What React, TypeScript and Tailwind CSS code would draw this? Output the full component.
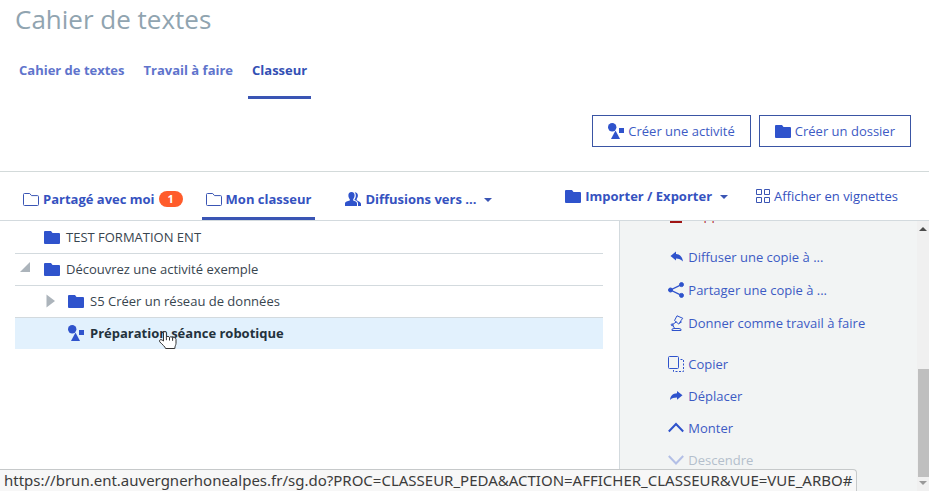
import type { ReactNode } from "react";
import clsx from "clsx";

const STATUS_URL =
  "https://brun.ent.auvergnerhonealpes.fr/sg.do?PROC=CLASSEUR_PEDA&ACTION=AFFICHER_CLASSEUR&VUE=VUE_ARBO#";

function FolderIcon() {
  return (
    <svg viewBox="0 0 16 13" className="h-[13px] w-4 shrink-0" fill="#2f53cc" aria-hidden="true">
      <path d="M0 1a1 1 0 0 1 1-1h6l1.500 2H15a1 1 0 0 1 1 1v9a1 1 0 0 1-1 1H1a1 1 0 0 1-1-1z" />
    </svg>
  );
}

function FolderOutlineIcon() {
  return (
    <svg viewBox="0 0 16 13" className="h-[13px] w-4 shrink-0" fill="none" stroke="#3a55b4" aria-hidden="true">
      <path d="M.5 11.5v-10a1 1 0 0 1 1-1h5.200L8.500 2.600h6a1 1 0 0 1 1 1v7.900a1 1 0 0 1-1 1h-13a1 1 0 0 1-1-1z" />
    </svg>
  );
}

function ActivityIcon() {
  return (
    <svg viewBox="0 0 16 16" className="size-4 shrink-0" fill="#2f53cc" aria-hidden="true">
      <circle cx="4.2" cy="4.2" r="4.2" />
      <path d="M7.500 7.500 12 16H3z" />
      <path d="M11 5h5v5h-5z" />
    </svg>
  );
}

function UsersIcon() {
  return (
    <svg viewBox="0 0 16 14" className="h-3.5 w-4 shrink-0" fill="#2f53cc" aria-hidden="true">
      <path d="M6.500 0c2.200 0 3.200 1.600 3.100 3.600-.1 1.700-.8 2.900-1.400 3.600v1.300c1.700.7 3.800 1.200 3.800 3V14H0v-2.500c0-1.800 2.600-2.300 4.800-3V7.200c-.8-.8-1.400-2-1.400-3.600C3.300 1.400 4.400 0 6.500 0z" />
      <path d="M9.600.3c2 0 3.400 1.400 3.300 3.500-.1 1.400-.6 2.400-1.200 3.100v1.400l2.300 1.300c1.300.7 2 1.500 2 2.700V14h-3v-2.600c0-1.600-1.500-2.600-3.500-3.300V7.500c.8-1 1.300-2.300 1.300-3.800 0-1.400-.3-2.500-1.200-3.400z" />
    </svg>
  );
}

function GridIcon() {
  return (
    <svg viewBox="0 0 14 14" className="size-3.5 shrink-0" fill="none" stroke="#3a55b4" aria-hidden="true">
      <path d="M.5.5h5v5h-5zM8.500.5h5v5h-5zM.5 8.500h5v5h-5zM8.500 8.500h5v5h-5z" />
    </svg>
  );
}

function Caret() {
  return (
    <svg viewBox="0 0 8 4" className="ml-1 mt-0.5 h-1 w-2 shrink-0" fill="#3a55b4" aria-hidden="true">
      <path d="M0 0h8L4 4z" />
    </svg>
  );
}

function TrashIcon() {
  return (
    <svg viewBox="0 0 16 16" className="size-4" fill="#a01414" aria-hidden="true">
      <path d="M1 2h4V0h6v2h4v2H1zM2 5h12v11H2z" />
      <path d="M5 7v7M8 7v7M11 7v7" stroke="#f3f5f5" />
    </svg>
  );
}

function ReplyIcon() {
  return (
    <svg viewBox="0 0 16 16" className="size-4" fill="#2f53cc" aria-hidden="true">
      <path d="M2.500 7 8 2.500V5c4 .3 6.500 3 7 7.500-2-2.300-4-3-7-3.100v2.200z" />
    </svg>
  );
}

function ForwardIcon() {
  return (
    <svg viewBox="0 0 16 16" className="size-4" fill="#2f53cc" aria-hidden="true">
      <path d="M14.500 7.200 9 3v2.200C5 5.400 2.400 7.500 2 12c1.800-1.800 4-2.500 7-2.500v2.300z" />
    </svg>
  );
}

function ShareIcon() {
  return (
    <svg viewBox="0 0 16 16" className="size-4" fill="#2f53cc" stroke="#2f53cc" aria-hidden="true">
      <path d="M13.500 2.700 2.500 8l11 5.300" fill="none" strokeWidth="1.300" />
      <circle cx="13.500" cy="2.600" r="2" />
      <circle cx="2.500" cy="8" r="2" />
      <circle cx="13.500" cy="13.400" r="2" />
    </svg>
  );
}

function LampIcon() {
  return (
    <svg viewBox="0 0 16 16" className="size-4" fill="none" stroke="#2f53cc" strokeLinejoin="round" aria-hidden="true">
      <path d="M4 15.500v-1.300l2-.7h5l2 .7v1.300z" />
      <path d="m6.500 13.300-2-3.800 4-2.700" />
      <circle cx="4.200" cy="9.800" r="1" />
      <path d="m9 .8 5.800 2.500-1.500 1.800-2.500 4-4.300-3.600z" />
      <path d="m11.300 8.300 2.500-1.500" />
    </svg>
  );
}

function CopyIcon() {
  return (
    <svg viewBox="0 0 16 16" className="size-4" fill="none" stroke="#2f53cc" aria-hidden="true">
      <rect x=".5" y=".5" width="10" height="12" rx="1" />
      <path d="M12.500 3.500h3v12H5.500v-2" strokeDasharray="2 1.500" />
    </svg>
  );
}

function UpIcon() {
  return (
    <svg viewBox="0 0 16 16" className="size-4" fill="none" stroke="#2f53cc" strokeWidth="2" aria-hidden="true">
      <path d="m.8 11.500 7.200-7.500 7.200 7.500" />
    </svg>
  );
}

function DownIcon() {
  return (
    <svg viewBox="0 0 16 16" className="size-4" fill="none" stroke="#b3bfe6" strokeWidth="2" aria-hidden="true">
      <path d="m.8 4 7.200 7.500 7.200-7.500" />
    </svg>
  );
}

function HandCursor() {
  return (
    <svg
      viewBox="0 0 18 18"
      className="pointer-events-none absolute left-36 top-[13px] size-[18px]"
      fill="#fff"
      stroke="#333"
      strokeLinejoin="round"
      aria-hidden="true"
    >
      <path d="M4.500 10V1.900c0-1.900 2.900-1.900 2.900 0v4.300c.3-1.100 2.900-1.100 3.100.3.500-1.100 2.900-.9 3.100.5.700-.9 3.400-.5 3.400 1.300v4c0 1.700-1 2.200-1.200 5.200H6.600C6 15.500 3.500 13.800.8 10.900c-1.200-1.500.7-3 2.300-1.900z" />
      <path d="M7.400 6.200v3M10.500 6.500v3M13.600 7v2.800" />
    </svg>
  );
}

type TreeRowProps = {
  label: string;
  icon: ReactNode;
  nested?: boolean;
  state?: "open" | "closed";
  selected?: boolean;
};

function TreeRow({ label, icon, nested, state, selected }: TreeRowProps) {
  return (
    <li
      className={clsx(
        "relative flex items-center pb-px",
        nested ? "pl-[29px]" : "pl-[5px]",
        selected ? "h-[31px] bg-[#e2f1fd]" : "h-8 border-b border-[#d3dade]"
      )}
    >
      <span className="flex w-6 shrink-0 items-center">
        {state ? (
          <button type="button" aria-label={state === "open" ? "Replier" : "Déplier"} aria-expanded={state === "open"}>
            {state === "open" ? (
              <svg viewBox="0 0 10 14" className="h-3.5 w-2.5" fill="#acb4bb">
                <path d="M10 0v10H0z" />
              </svg>
            ) : (
              <svg viewBox="0 0 10 14" className="ml-0.5 h-3.5 w-2.5" fill="#acb4bb">
                <path d="M.5.500v13L9 7z" />
              </svg>
            )}
          </button>
        ) : null}
      </span>
      <a href="#" className={clsx("flex items-center gap-1.5", selected && "font-bold text-[#24323c]")}>
        {icon}
        {label}
      </a>
      {selected ? <HandCursor /> : null}
    </li>
  );
}

type Action = { label: string; icon: ReactNode; tone?: "danger" | "disabled" };

const ACTION_GROUPS: Action[][] = [
  [{ label: "Supprimer", icon: <TrashIcon />, tone: "danger" }],
  [
    { label: "Diffuser une copie à ...", icon: <ReplyIcon /> },
    { label: "Partager une copie à ...", icon: <ShareIcon /> },
    { label: "Donner comme travail à faire", icon: <LampIcon /> }
  ],
  [
    { label: "Copier", icon: <CopyIcon /> },
    { label: "Déplacer", icon: <ForwardIcon /> },
    { label: "Monter", icon: <UpIcon /> },
    { label: "Descendre", icon: <DownIcon />, tone: "disabled" }
  ]
];

export default function App() {
  return (
    <div className="relative flex h-screen flex-col overflow-hidden bg-white font-['Open_Sans',sans-serif] text-[13px] leading-5 text-[#38454f]">
      <header className="border-b border-[#d3dada] pb-6">
        <h1 className="pl-[15px] pt-px text-[26px] leading-9 text-[#90a4b0]">Cahier de textes</h1>
        <nav className="mt-[23px] flex gap-[11px] pl-[15px] font-bold text-[#6074cc]">
          <a href="#" className="border-b-3 border-transparent px-1 pb-4">
            Cahier de textes
          </a>
          <a href="#" className="border-b-3 border-transparent px-1 pb-4">
            Travail à faire
          </a>
          <a href="#" aria-current="page" className="border-b-3 border-[#3a55b4] px-1 pb-4 text-[#3350b4]">
            Classeur
          </a>
        </nav>
        <div className="mt-4 flex justify-end gap-2 pr-[18px] text-[#3d5bc4]">
          <button type="button" className="flex h-8 items-center gap-1 border border-[#3a55a4] px-[15px]">
            <ActivityIcon />
            Créer une activité
          </button>
          <button type="button" className="flex h-8 items-center gap-1 border border-[#3a55a4] px-[15px]">
            <FolderIcon />
            Créer un dossier
          </button>
        </div>
      </header>

      <div className="flex h-[49px] shrink-0 justify-between border-b border-[#d3dade] pl-[19px] pr-[31px] text-[#3552c0]">
        <nav className="flex font-bold">
          <a href="#" className="flex items-center gap-1 px-1 pt-1.5">
            <FolderOutlineIcon />
            Partagé avec moi
            <span className="w-6 rounded-full bg-[#ff5c2b] text-center text-[11px] leading-4 text-white">1</span>
          </a>
          <a
            href="#"
            aria-current="page"
            className="ml-[15px] flex items-center gap-1 border-b-3 border-[#3a55b4] px-1 pt-[9px]"
          >
            <FolderOutlineIcon />
            Mon classeur
          </a>
          <button type="button" className="ml-[26px] flex items-center gap-1 px-1 pt-1.5 font-bold">
            <UsersIcon />
            Diffusions vers ...
            <Caret />
          </button>
        </nav>
        <div className="flex gap-7">
          <button type="button" className="flex items-center gap-1 font-bold">
            <FolderIcon />
            Importer / Exporter
            <Caret />
          </button>
          <button type="button" className="flex items-center gap-1">
            <GridIcon />
            Afficher en vignettes
          </button>
        </div>
      </div>

      <div className="flex min-h-0 flex-1">
        <main className="w-2/3 pl-[15px] pr-4 pt-px">
          <ul>
            <TreeRow label="TEST FORMATION ENT" icon={<FolderIcon />} />
            <TreeRow label="Découvrez une activité exemple" icon={<FolderIcon />} state="open" />
            <TreeRow label="S5 Créer un réseau de données" icon={<FolderIcon />} state="closed" nested />
            <TreeRow label="Préparation séance robotique" icon={<ActivityIcon />} nested selected />
          </ul>
        </main>

        <aside className="flex w-1/3 border-l border-[#d3dade] bg-[#f2f4f4]">
          <div className="flex-1 overflow-hidden pl-12">
            <div className="-mt-[22px] flex flex-col gap-[9px]">
              {ACTION_GROUPS.map((group, i) => (
                <ul key={i}>
                  {group.map((action) => (
                    <li key={action.label} className={clsx("flex items-center", i === 1 ? "h-[33px]" : "h-8")}>
                      <button
                        type="button"
                        disabled={action.tone === "disabled"}
                        className={clsx(
                          "flex items-center gap-1",
                          action.tone === "danger" && "text-[#b01c2e]",
                          action.tone === "disabled" && "text-[#b4bfcc]",
                          !action.tone && "text-[#3d5bc4]"
                        )}
                      >
                        {action.icon}
                        {action.label}
                      </button>
                    </li>
                  ))}
                </ul>
              ))}
            </div>
          </div>
          <div className="flex w-3 shrink-0 flex-col items-center bg-[#f0f0f0]" aria-hidden="true">
            <svg viewBox="0 0 8 4" className="mb-auto mt-1.5 h-1 w-2" fill="#4c4c4c">
              <path d="M0 4h8L4 0z" />
            </svg>
            <div className="h-2/5 w-[11px] self-end bg-[#bfbfbf]" />
            <svg viewBox="0 0 8 4" className="mb-1.5 mt-1 h-1 w-2" fill="#999">
              <path d="M0 0h8L4 4z" />
            </svg>
          </div>
        </aside>
      </div>

      <div className="absolute bottom-0 left-0 whitespace-nowrap rounded-tr border-r border-t border-[#c6c9ca] bg-[#f7f7f7] px-1 font-['Noto_Sans',sans-serif] text-[15px] leading-[21px] text-[#3c3c3c]">
        {STATUS_URL}
      </div>
    </div>
  );
}
